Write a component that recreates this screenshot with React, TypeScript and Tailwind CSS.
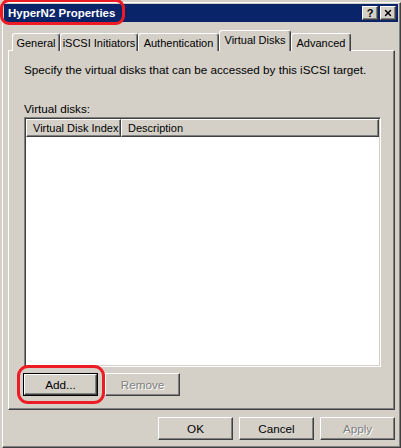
import { X } from 'lucide-react'

const raised =
  'border border-solid border-t-white border-l-white border-r-[#404040] border-b-[#404040] shadow-[inset_-1px_-1px_0_#808080]'

interface ButtonProps {
  label: string
  disabled?: boolean
  isDefault?: boolean
}

const Button = ({ label, disabled, isDefault }: ButtonProps) => {
  const text = disabled ? 'text-[#808080] [text-shadow:1px_1px_0_#ffffff]' : 'text-black'
  if (isDefault) {
    return (
      <div className="w-[75px] h-[23px] border border-solid border-black">
        <div className={`${raised} h-full flex items-center justify-center bg-[#d4d0c8] ${text}`}>
          {label}
        </div>
      </div>
    )
  }
  return (
    <div className={`${raised} w-[75px] h-[23px] flex items-center justify-center bg-[#d4d0c8] ${text}`}>
      {label}
    </div>
  )
}

const tabs = [
  { label: 'General', w: 'w-[48px]' },
  { label: 'iSCSI Initiators', w: 'w-[78px]' },
  { label: 'Authentication', w: 'w-[81px]' },
  { label: 'Virtual Disks', w: 'w-[72px]', active: true },
  { label: 'Advanced', w: 'w-[60px]' },
]

const App = () => {
  return (
    <div className="relative w-[401px] h-[448px] overflow-hidden bg-[#d4d0c8] pl-[2px] pt-[2px] font-['Liberation_Sans',Arial,sans-serif] text-[11.7px] leading-[13px] text-black whitespace-nowrap">
      {/* Window frame */}
      <div className="h-full border border-solid border-t-white border-l-white border-r-[#404040] border-b-[#404040] shadow-[inset_-1px_-1px_0_#808080] pl-[1px] pr-[2px] pt-[1px]">
        {/* Title bar */}
        <div className="h-[18px] bg-[#0a246a] flex items-center justify-between pl-[4px] pr-[2px]">
          <span className="font-bold text-white text-[11.5px]">HyperN2 Properties</span>
          <div className="flex gap-[2px]">
            <div className={`${raised} w-[16px] h-[14px] bg-[#d4d0c8] flex items-center justify-center font-bold text-[11px] leading-none`}>
              ?
            </div>
            <div className={`${raised} w-[16px] h-[14px] bg-[#d4d0c8] flex items-center justify-center`}>
              <X className="w-[10px] h-[10px]" strokeWidth={3.5} />
            </div>
          </div>
        </div>

        {/* Body */}
        <div className="pl-[4px]">
          {/* Tabs */}
          <div className="relative z-10 mt-[8px] -mb-px flex items-end h-[21px] pl-[4px] text-[11px]">
            {tabs.map((t) =>
              t.active ? (
                <div
                  key={t.label}
                  className={`${t.w} h-[21px] bg-[#d4d0c8] border-l border-t border-r border-solid border-l-white border-t-white border-r-[#404040] rounded-t-[3px] shadow-[inset_-1px_0_0_#808080] flex justify-center pt-[3px]`}
                >
                  {t.label}
                </div>
              ) : (
                <div
                  key={t.label}
                  className={`${t.w} h-[18px] bg-[#d4d0c8] border-l border-t border-r border-solid border-l-white border-t-white border-r-[#404040] rounded-t-[3px] shadow-[inset_-1px_0_0_#808080] flex justify-center pt-[3px]`}
                >
                  {t.label}
                </div>
              )
            )}
          </div>

          {/* Tab panel */}
          <div className="w-[387px] h-[360px] border border-solid border-t-white border-l-white border-r-[#404040] border-b-[#404040] shadow-[inset_-1px_-1px_0_#808080] pl-[15px] pt-[12px]">
            <p>Specify the virtual disks that can be accessed by this iSCSI target.</p>
            <p className="mt-[26px]">Virtual disks:</p>

            {/* List view */}
            <div className="mt-[2px] w-[357px] h-[250px] border border-solid border-t-[#808080] border-l-[#808080] border-r-white border-b-white shadow-[inset_1px_1px_0_#404040,inset_-1px_-1px_0_#d4d0c8] p-[1px]">
              <div className="h-full bg-white flex flex-col">
                <div className="flex h-[18px] bg-[#d4d0c8] text-[11px]">
                  <div className={`${raised} w-[95px] flex items-center pl-[6px]`}>Virtual Disk Index</div>
                  <div className={`${raised} flex-1 flex items-center pl-[6px]`}>Description</div>
                </div>
              </div>
            </div>

            {/* List buttons */}
            <div className="mt-[6px] -ml-[1px] flex gap-[7px]">
              <Button label="Add..." isDefault />
              <Button label="Remove" disabled />
            </div>
          </div>

          {/* Dialog buttons */}
          <div className="w-[387px] mt-[7px] flex justify-end gap-[6px]">
            <Button label="OK" />
            <Button label="Cancel" />
            <Button label="Apply" disabled />
          </div>
        </div>
      </div>

      {/* Red annotations */}
      <div className="absolute left-0 top-[-1px] w-[125px] h-[26px] border-[3px] border-solid border-[#ed1c24] rounded-[9px]" />
      <div className="absolute left-[17px] top-[365px] w-[88px] h-[39px] border-[3px] border-solid border-[#ed1c24] rounded-[11px]" />
    </div>
  )
}

export default App
